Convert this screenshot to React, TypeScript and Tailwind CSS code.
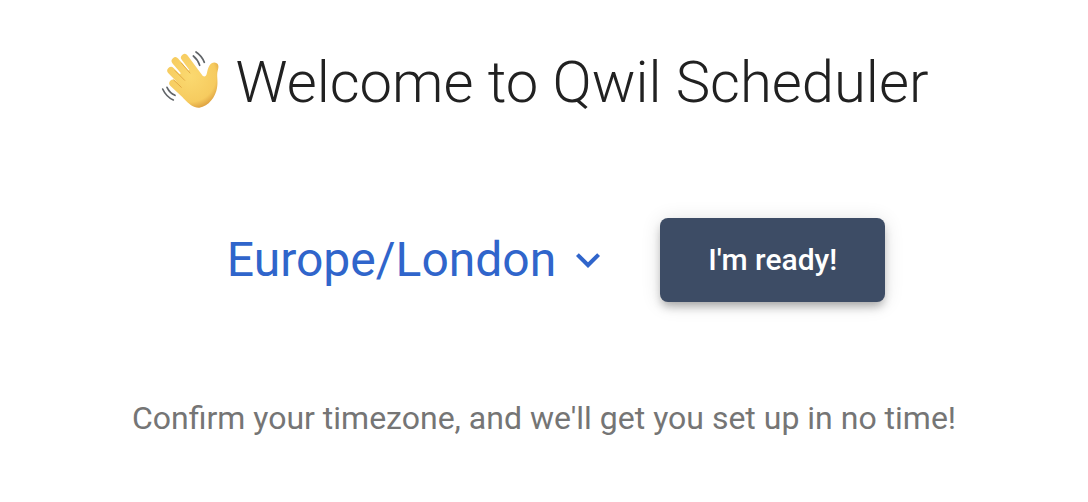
import { useState } from "react";

const TIMEZONES = [
  "Europe/London",
  "Europe/Paris",
  "America/New_York",
  "Asia/Singapore",
];

function WavingHand() {
  return (
    <svg
      viewBox="18 18 180 192"
      className="h-16 w-15 shrink-0"
      fill="none"
      strokeLinecap="round"
      strokeLinejoin="round"
      aria-hidden="true"
    >
      <defs>
        <radialGradient
          id="skin"
          gradientUnits="userSpaceOnUse"
          cx="108"
          cy="96"
          r="104"
        >
          <stop offset="0" stopColor="#fbd970" />
          <stop offset="0.75" stopColor="#f6cb5f" />
          <stop offset="1" stopColor="#d9993a" />
        </radialGradient>
      </defs>
      {/* Fingers */}
      <g stroke="url(#skin)" strokeWidth="22">
        <path d="M92 41 136 100" />
        <path d="M64 51 118 114" />
        <path d="M51 80 106 136" />
        <path d="M57 118 98 156" />
      </g>
      {/* Palm and thumb */}
      <path
        fill="url(#skin)"
        d="M122 72 142 93C150 100 156 98 158 90C161 79 161 73 166 65C172 56 181 53 188 58C195 62 194 71 191 81C187 96 193 110 189 132C185 158 164 187 136 191C119 192 106 182 88 162L66 126 70 92Z"
      />
      {/* Creases between the fingers */}
      <g stroke="#dda03c" strokeWidth="2.5">
        <path d="M82 57 108 87" />
        <path d="M63 80 92 109" />
        <path d="M59 108 82 130" />
      </g>
      {/* Motion lines */}
      <g stroke="#606468" strokeWidth="5">
        <path d="M126 24Q143 35 151 55" />
        <path d="M118 36Q131 46 137 64" />
        <path d="M39 130Q47 147 63 154" />
        <path d="M26 135Q37 159 58 168" />
      </g>
    </svg>
  );
}

export default function App() {
  const [timezone, setTimezone] = useState(TIMEZONES[0]);

  return (
    <main className="flex min-h-screen flex-col items-center bg-white px-6 pt-[42px] font-[Roboto,sans-serif]">
      <h1 className="flex items-center gap-4 text-[58px] leading-20 font-light text-[#212121]">
        <WavingHand />
        Welcome to Qwil Scheduler
      </h1>

      <form
        className="mt-24 flex flex-wrap items-center justify-center gap-12"
        onSubmit={(e) => e.preventDefault()}
      >
        <div className="relative text-[#3065cb]">
          <select
            aria-label="Timezone"
            value={timezone}
            onChange={(e) => setTimezone(e.target.value)}
            className="field-sizing-content cursor-pointer appearance-none bg-transparent pr-14 pl-6 text-5xl leading-16 outline-none"
          >
            {TIMEZONES.map((tz) => (
              <option key={tz} value={tz}>
                {tz}
              </option>
            ))}
          </select>
          <svg
            viewBox="0 0 24 24"
            fill="currentColor"
            className="pointer-events-none absolute inset-y-0 right-0 my-auto h-12 w-12"
            aria-hidden="true"
          >
            <path d="M16.59 8.59 12 13.17 7.41 8.59 6 10l6 6 6-6z" />
          </svg>
        </div>
        <button
          type="submit"
          className="rounded-lg bg-[#3d4c65] px-12 py-5 text-3xl leading-11 font-medium text-white shadow-[0_6px_10px_-2px_rgba(0,0,0,0.3),0_2px_20px_rgba(0,0,0,0.12)]"
        >
          I&apos;m ready!
        </button>
      </form>

      <p className="mt-24 text-center text-[32px] leading-10 text-[#757575]">
        Confirm your timezone, and we&apos;ll get you set up in no time!
      </p>
    </main>
  );
}
